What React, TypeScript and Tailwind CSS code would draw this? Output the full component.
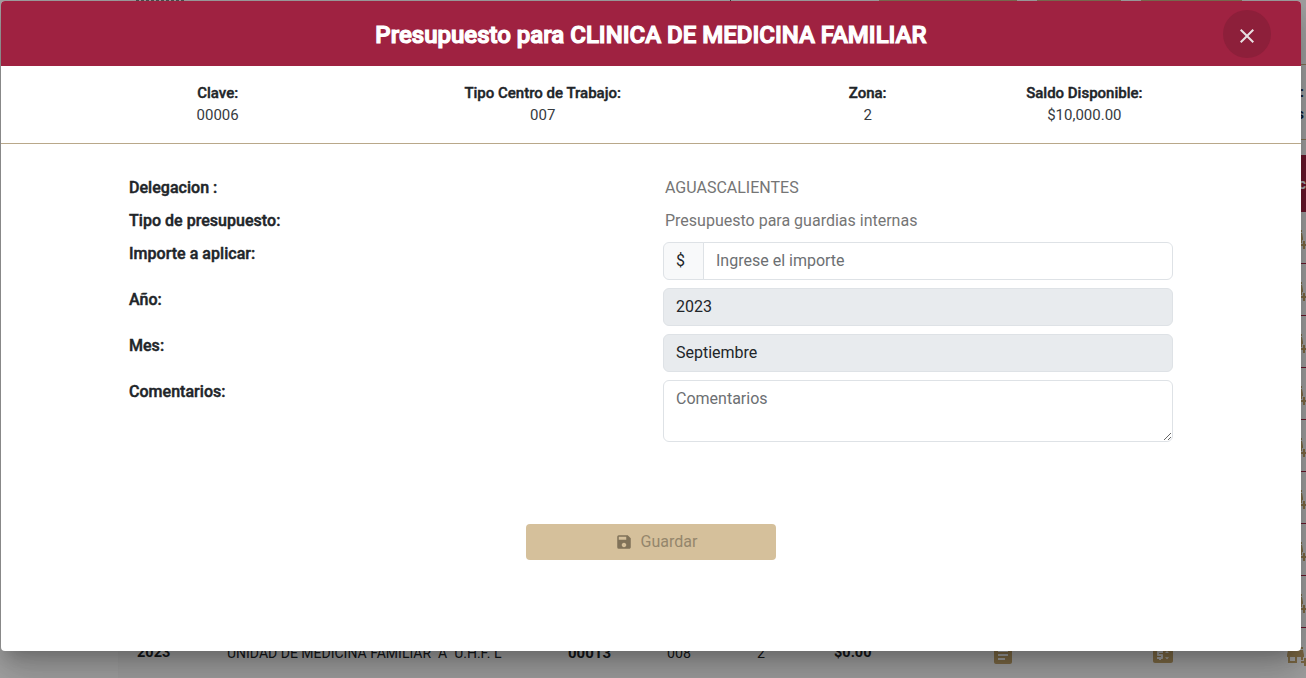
import type { ReactNode } from 'react';
import { MdAddBusiness, MdArticle, MdClose, MdPriceChange, MdSave } from 'react-icons/md';

const pendingRows = [1, 2, 3, 4, 5, 6, 7, 8];

const summary = [
  { label: 'Clave:', value: '00006', place: 'col-start-2' },
  { label: 'Tipo Centro de Trabajo:', value: '007', place: 'col-start-5' },
  { label: 'Zona:', value: '2', place: 'col-start-8' },
  { label: 'Saldo Disponible:', value: '$10,000.00', place: 'col-start-10' },
];

function Background() {
  return (
    <div className="flex h-[690px] w-[1330px] bg-[#f5f5f5]">
      <aside className="w-[119px] shrink-0 border-r border-[#efefef]" />
      <main className="flex flex-1 flex-col bg-[#f1f1f1]">
        <div className="flex h-[64px] shrink-0 items-start">
          <div className="h-px w-[612px] border-r border-[#555] pl-[17px]">
            <div className="h-px w-[48px] border-t border-dashed border-[#777]" />
          </div>
          <div className="ml-[148px] flex gap-5">
            <div className="h-px w-[138px] bg-[#bca67d]" />
            <div className="h-px w-[84px] bg-[#bca67d]" />
            <div className="h-px w-[101px] bg-[#bca67d]" />
          </div>
        </div>
        <div className="flex h-[76px] shrink-0 flex-col items-end border-y border-[#c4aa80] pt-4 pr-[26px] text-[15px] leading-[22px] font-bold text-[#10284b]">
          <span>Saldo:</span>
          <span>Acciones</span>
        </div>
        <div className="mt-[15px] flex h-[57px] shrink-0 items-center justify-end bg-[#9f2241] pr-[24px] text-sm font-bold text-white">
          <span>Ac</span>
        </div>
        {pendingRows.map((row) => (
          <div key={row} className="flex h-[52px] shrink-0 items-center justify-end border-b border-[#9f2241] pr-[21px] text-[#bc9e68]">
            <MdAddBusiness size={24} />
          </div>
        ))}
        <div className="grid h-[50px] shrink-0 grid-cols-[90px_341px_99px_90px_77px_156px_160px_134px_1fr] items-center pl-[18px] text-[14.5px] whitespace-pre text-[#212529]">
          <b>2023</b>
          <span className="text-[14px]">UNIDAD DE MEDICINA FAMILIAR  A  U.H.F. L</span>
          <b className="text-[15px]">00013</b>
          <span className="text-[14.2px]">008</span>
          <span className="text-[14.2px]">2</span>
          <b>$0.00</b>
          <span className="pt-[3px] pl-px text-[#bc9e68]"><MdArticle size={24} /></span>
          <span className="pt-[3px] pl-px text-[#bc9e68]"><MdPriceChange size={24} /></span>
          <span className="pt-[3px] pl-[2px] text-[#bc9e68]"><MdAddBusiness size={24} /></span>
        </div>
      </main>
    </div>
  );
}

function Row({ label, height, children }: { label: string; height: string; children: ReactNode }) {
  return (
    <div className={`grid grid-cols-2 gap-x-6 ${height}`}>
      <div className="font-medium tracking-[0.03px] [-webkit-text-stroke:0.45px_#212529]">{label}</div>
      <div>{children}</div>
    </div>
  );
}

const field = 'block w-full rounded-md border border-[#dee2e6] px-3 py-[6px] leading-6 outline-none placeholder:text-[#6c6f72]';

export default function App() {
  return (
    <div className="relative h-[678px] w-full overflow-hidden font-['Roboto',sans-serif] text-base leading-6 text-[#212529]">
      <Background />
      <div className="absolute inset-0 bg-black/32" />
      <section className="absolute top-px left-px h-[650px] w-[1300px] overflow-hidden rounded bg-white shadow-[0_11px_15px_-7px_rgba(0,0,0,0.2),0_24px_38px_3px_rgba(0,0,0,0.14),0_9px_46px_8px_rgba(0,0,0,0.12)]">
        <header className="flex h-[65px] items-center bg-[#9f2241] pr-[30px] pl-[78px]">
          <h1 className="flex-1 pt-[3px] text-center text-2xl font-medium text-white [-webkit-text-stroke:1.2px_white]">
            Presupuesto para CLINICA DE MEDICINA FAMILIAR
          </h1>
          <button aria-label="Cerrar" className="flex size-12 items-center justify-center rounded-full bg-[#8d1f3a] pt-1 text-[#e8e0e2]">
            <MdClose size={24} />
          </button>
        </header>
        <div className="grid h-[78px] grid-cols-12 border-b border-[#b9a88a] pt-4 text-center text-[15px] leading-[22px]">
          {summary.map((s) => (
            <div key={s.label} className={`col-span-2 ${s.place}`}>
              <div className="font-medium [-webkit-text-stroke:0.4px_#212529]">{s.label}</div>
              <div className="text-[#373b3f]">{s.value}</div>
            </div>
          ))}
        </div>
        <form className="px-32 pt-8">
          <Row label="Delegacion :" height="h-[33px]">
            <span className="pl-[2px] text-[#757575]">AGUASCALIENTES</span>
          </Row>
          <Row label="Tipo de presupuesto:" height="h-[33px]">
            <span className="pl-[2px] text-[#757575]">Presupuesto para guardias internas</span>
          </Row>
          <Row label="Importe a aplicar:" height="h-[46px]">
            <div className="flex">
              <span className="h-[38px] w-[41px] shrink-0 rounded-l-md border border-[#dee2e6] bg-[#f8f9fa] px-3 py-[6px]">$</span>
              <input placeholder="Ingrese el importe" className="-ml-px block h-[38px] min-w-0 flex-1 rounded-r-md border border-[#dee2e6] px-3 pb-[2px] outline-none placeholder:text-[#6c6f72]" />
            </div>
          </Row>
          <Row label="Año:" height="h-[46px]">
            <input readOnly value="2023" className={`${field} bg-[#e8ebee]`} />
          </Row>
          <Row label="Mes:" height="h-[46px]">
            <input readOnly value="Septiembre" className={`${field} bg-[#e8ebee]`} />
          </Row>
          <Row label="Comentarios:" height="h-[62px]">
            <textarea placeholder="Comentarios" className={`${field} h-[62px] resize-y`} />
          </Row>
          <button type="button" className="mx-auto mt-[82px] flex h-9 w-[250px] items-center justify-center gap-[8px] rounded bg-[#d5c09b] pl-[10px] text-[#94866c]">
            <MdSave size={18} className="text-[#807259]" />
            <span>Guardar</span>
          </button>
        </form>
      </section>
    </div>
  );
}
